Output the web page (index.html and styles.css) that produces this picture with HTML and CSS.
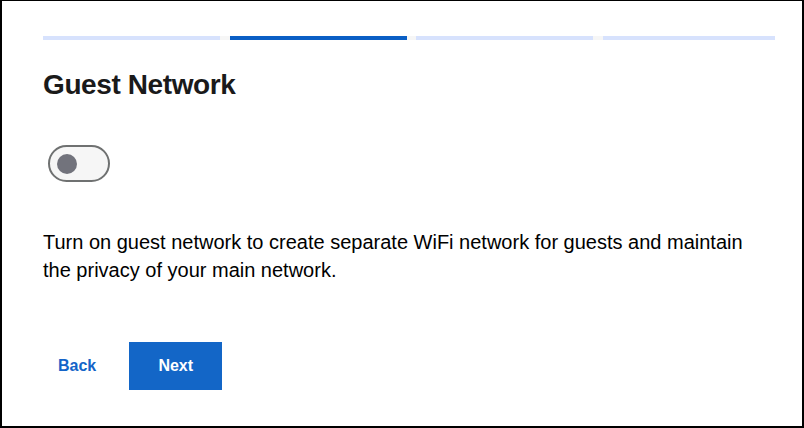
FILE: index.html
```html
<!DOCTYPE html>
<html lang="en">
<head>
    <meta charset="UTF-8">
    <meta name="viewport" content="width=device-width, initial-scale=1.0">
    <title>Guest Network</title>
    <link rel="stylesheet" href="styles.css">
</head>
<body>
    <div class="frame">
        <div class="steps">
            <span class="step done"></span>
            <span class="step active"></span>
            <span class="step"></span>
            <span class="step"></span>
        </div>

        <h1>Guest Network</h1>

        <div class="toggle" role="switch" aria-checked="false">
            <span class="knob"></span>
        </div>

        <p class="desc">Turn on guest network to create separate WiFi network for guests and maintain the privacy of your main network.</p>

        <div class="actions">
            <button class="btn-link">Back</button>
            <button class="btn-primary">Next</button>
        </div>
    </div>
</body>
</html>
```

FILE: styles.css
```css
html, body {
    margin: 0;
    padding: 0;
    background: #fff;
}

body {
    font-family: "Liberation Sans", Arial, sans-serif;
    color: #000;
}

.frame {
    box-sizing: border-box;
    width: 804px;
    height: 428px;
    border-style: solid;
    border-color: #000;
    border-width: 1px 2px 2px 2px;
    padding: 35px 27px 0 41px;
}

.steps {
    display: grid;
    grid-template-columns: 177px 177px 177px 1fr;
    gap: 9.5px;
    background: #f6f6f6;
}

.step {
    display: block;
    height: 4px;
    background: #d7e2fd;
}

.step.active {
    background: #0a5fc5;
}

h1 {
    margin: 29px 0 0;
    font-size: 28px;
    line-height: 32px;
    font-weight: bold;
    letter-spacing: -0.4px;
    color: #1a1a1a;
}

.toggle {
    box-sizing: border-box;
    width: 62px;
    height: 37px;
    margin: 44px 0 0 5px;
    border: 2px solid #6f7171;
    border-radius: 20px;
    background: #f6f6f6;
    display: flex;
    align-items: center;
    padding-left: 7px;
}

.knob {
    width: 20px;
    height: 20px;
    border-radius: 50%;
    background: #72737c;
}

.desc {
    max-width: 715px;
    margin: 46px 0 0;
    font-size: 20px;
    line-height: 28px;
    color: #000;
}

.actions {
    display: flex;
    align-items: center;
    gap: 18px;
    margin-top: 58px;
}

button {
    font-family: inherit;
    font-size: 16px;
    font-weight: bold;
    height: 48px;
    border: none;
    cursor: pointer;
}

.btn-link {
    background: none;
    color: #1464c8;
    padding: 0 15px;
}

.btn-primary {
    width: 93px;
    background: #1366c7;
    color: #fff;
}
```
